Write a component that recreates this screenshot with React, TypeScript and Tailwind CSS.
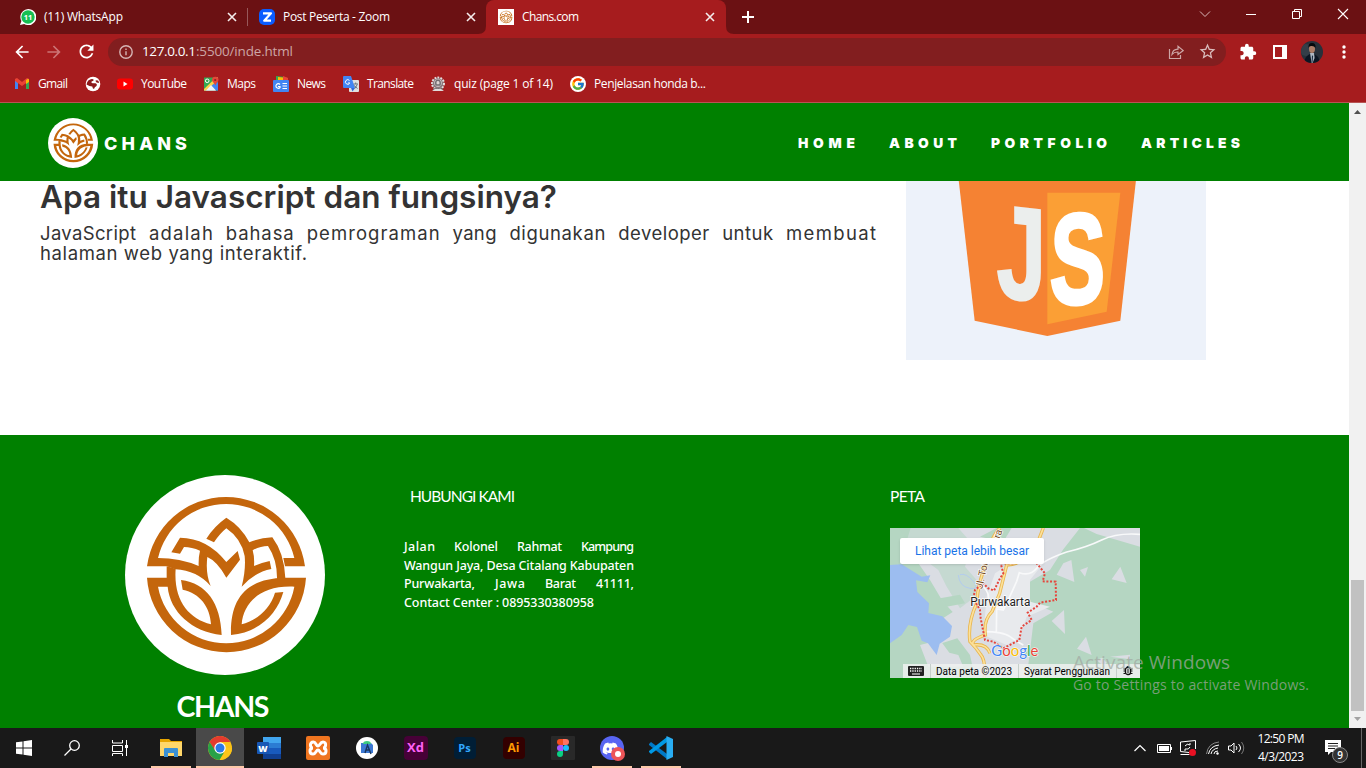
import { useLayoutEffect, useRef, useState } from "react";
import type { ReactNode } from "react";
import { FcGoogle } from "react-icons/fc";
import { FaDiscord } from "react-icons/fa";
import { MdExtension, MdStarOutline, MdRefresh, MdArrowBack, MdArrowForward } from "react-icons/md";

/* Text tracked so that it spans exactly `w` pixels. */
function Fit({ w, className = "", children }: { w: number; className?: string; children: string }) {
  const ref = useRef<HTMLSpanElement>(null);
  const [ls, setLs] = useState(0);
  useLayoutEffect(() => {
    const el = ref.current;
    if (!el) return;
    el.style.letterSpacing = "0px";
    const natural = el.getBoundingClientRect().width;
    const next = (w - natural) / Math.max(1, children.length - 1);
    el.style.letterSpacing = `${next}px`;
    setLs(next);
  }, [w, children]);
  return (
    <span className={`block shrink-0 whitespace-nowrap ${className}`} style={{ width: w }}>
      <span ref={ref} style={{ letterSpacing: ls }}>{children}</span>
    </span>
  );
}

function Emblem({ className }: { className: string }) {
  return (
    <svg viewBox="75 45 600 600" className={className}>
      <circle cx="375" cy="345" r="300" fill="#fff" />
      <g fill="#c4660c">
        <path d="M141 319A239 239 0 0 1 615 319H555L550 294H583A210 210 0 0 0 174 294Q240 294 296 318Q295 292 300 272Q275 261 252 261L240 281L214 277L240 233Q322 234 379 306L413 273L420 299L379 353Q352 304 322 291Q316 340 332 378Q292 332 226 328L200 319Z" />
        <path d="M379 173Q424 200 448 247Q480 233 517 232Q553 280 556 354L531 357Q532 300 504 258Q480 258 458 271Q464 292 462 318Q486 307 509 303L514 327Q466 336 425 380Q438 330 434 288Q424 236 379 205Q360 220 342 247L319 236Q342 199 379 173Z" />
        <path d="M200 319L227 326C220 420 265 475 333 493C330 440 300 400 248 389L243 360C320 370 362 430 365 525C275 515 210 455 203 380H174A208 208 0 0 0 583 380C480 375 430 430 425 493C470 482 512 445 525 398L550 396C532 460 480 517 393 525C390 420 435 355 555 353H618A239 239 0 0 1 141 353H200Z" />
      </g>
    </svg>
  );
}

const Close = () => (
  <svg viewBox="0 0 10 10" className="size-[10px] shrink-0"><path d="M1 1l8 8M9 1l-8 8" stroke="#f5eded" strokeWidth="1.6" /></svg>
);

function TabStrip() {
  return (
    <div className="flex h-[34px] bg-[#6b1113] text-xs text-white">
      <div className="flex w-[247px] items-center pl-5">
        <svg viewBox="0 0 16 16" className="size-4"><path d="M0 16L1.4 12A8 8 0 1 1 4.2 14.9Z" fill="#fff" /><circle cx="8" cy="8" r="6.7" fill="#16bf52" /><text x="8" y="10.8" textAnchor="middle" fontFamily="Open Sans" fontWeight="700" fontSize="7.5" fill="#fff">11</text></svg>
        <Fit w={79} className="ml-2">(11) WhatsApp</Fit>
        <span className="ml-[104px]"><Close /></span>
      </div>
      <div className="mt-2 h-[18px] w-px bg-[#97585a]" />
      <div className="flex w-[238px] items-center pl-[11px]">
        <svg viewBox="0 0 16 16" className="size-4"><rect width="16" height="16" rx="5" fill="#0b5cff" /><path d="M4 4.3h8L5.2 11.7H12" fill="none" stroke="#fff" strokeWidth="2.2" strokeLinejoin="round" /></svg>
        <Fit w={107} className="ml-2">Post Peserta - Zoom</Fit>
        <span className="ml-[76px]"><Close /></span>
      </div>
      <div className="relative flex w-[240px] items-center rounded-t-lg bg-[#a61c1e] pl-3">
        <svg viewBox="0 0 8 8" className="absolute bottom-0 -left-2 size-2"><path d="M8 0V8H0Q8 8 8 0" fill="#a61c1e" /></svg>
        <svg viewBox="0 0 8 8" className="absolute -right-2 bottom-0 size-2"><path d="M0 0V8H8Q0 8 0 0" fill="#a61c1e" /></svg>
        <span className="bg-white"><Emblem className="block size-4" /></span>
        <Fit w={57} className="ml-2">Chans.com</Fit>
        <span className="ml-[126px]"><Close /></span>
      </div>
      <div className="flex flex-1 items-center pl-4">
        <svg viewBox="0 0 12 12" className="size-3"><path d="M6 0v12M0 6h12" stroke="#fff" strokeWidth="2" /></svg>
      </div>
      <div className="flex items-start gap-[34px] pt-[8px] pr-[17px]">
        <svg viewBox="0 0 12 12" className="size-3"><path d="M1 3.5l5 5 5-5" fill="none" stroke="#d9b8b8" /></svg>
        <svg viewBox="0 0 12 12" className="size-3"><path d="M1 6.5h10" stroke="#fff" /></svg>
        <svg viewBox="0 0 12 12" className="size-3"><path d="M1.5 3.5h7v7h-7zM3.5 3.5v-2h7v7h-2" fill="none" stroke="#fff" /></svg>
        <svg viewBox="0 0 12 12" className="size-3"><path d="M1 1l10 10M11 1l-10 10" stroke="#fff" strokeWidth="1.1" /></svg>
      </div>
    </div>
  );
}

function Toolbar() {
  return (
    <div className="flex h-[35px] items-center pl-[13px] text-white">
      <MdArrowBack className="size-[18px] scale-110" />
      <MdArrowForward className="ml-[14px] size-[18px] scale-110 text-[#cc7475]" />
      <MdRefresh className="ml-[14px] size-[19px] scale-110" />
      <div className="ml-[12px] flex h-7 w-[1118px] items-center rounded-full bg-[#821e1f] pl-[11px] text-[13.5px]">
        <svg viewBox="0 0 14 14" className="size-[14px]"><circle cx="7" cy="7" r="6.2" fill="none" stroke="#d6b5b5" strokeWidth="1.4" /><path d="M7 6.2v4M7 3.5v1.5" stroke="#d6b5b5" strokeWidth="1.4" /></svg>
        <Fit w={54} className="ml-[9px]">127.0.0.1</Fit>
        <Fit w={97} className="text-[#cda5a5]">:5500/inde.html</Fit>
        <svg viewBox="0 0 16 16" className="ml-auto size-4" fill="none" stroke="#cda5a5" strokeWidth="1.2"><path d="M1.5 5v9.5h11V11M4 10.5Q4.500 5.500 10 5.200V2.200L15.200 6.500 10 10.500V8Q6 7.800 4 10.500Z" /></svg>
        <MdStarOutline className="mr-[9px] ml-[14px] size-[19px] text-[#d9bcbc]" />
      </div>
      <MdExtension className="ml-[13px] size-[18px]" />
      <svg viewBox="0 0 14 14" className="ml-[16px] size-[14px]"><path d="M1 1h12v12H1z" fill="none" stroke="#fff" strokeWidth="2" /><path d="M9 1h4v12H9z" fill="#fff" /></svg>
      <svg viewBox="0 0 22 22" className="ml-[14px] size-[22px] rounded-full">
        <rect width="22" height="22" fill="#27303a" /><circle cx="5" cy="9" r="6" fill="#343e48" />
        <path d="M3 22Q4 14 11 12Q18 14 19 22Z" fill="#0b1522" /><path d="M9 12h4l.6 5-2 5h-1z" fill="#aeb8c3" /><path d="M11 14l1 1.500-.6 6h-.8z" fill="#10243a" />
        <ellipse cx="11" cy="7.800" rx="3" ry="4.300" fill="#ad7d67" /><path d="M7.500 7Q7 2 11 2T14.500 7Q13 4.500 10 5Q8 5 7.500 7Z" fill="#05080c" />
      </svg>
      <svg viewBox="0 0 4 14" className="ml-[19px] h-[14px] w-1" fill="#fff"><circle cx="2" cy="2" r="1.700" /><circle cx="2" cy="7" r="1.700" /><circle cx="2" cy="12" r="1.700" /></svg>
    </div>
  );
}

function Mark({ gap, w, label, children }: { gap: number; w?: number; label?: string; children: ReactNode }) {
  return (
    <div className="flex items-center" style={{ marginLeft: gap }}>
      {children}
      {label && w ? <Fit w={w} className="ml-2">{label}</Fit> : null}
    </div>
  );
}

function Bookmarks() {
  return (
    <div className="flex h-[33px] items-center pb-[3px] pl-[14px] text-xs text-white">
      <Mark gap={0} w={30} label="Gmail">
        <svg viewBox="0 0 16 16" className="size-4"><path d="M1 3v10h3V6z" fill="#4285f4" /><path d="M12 6v7h3V3z" fill="#34a853" /><path d="M1 5V3l2-1 5 4 5-4 2 1v2l-7 5z" fill="#ea4335" /><path d="M12 4.300l2-1.500 1 .7V6l-3 2z" fill="#fbbc04" /></svg>
      </Mark>
      <Mark gap={17}>
        <svg viewBox="0 0 16 16" className="size-4"><circle cx="8" cy="8" r="7.300" fill="#fff" /><path d="M3.300 4.500Q6 2.300 8.300 3.300Q9.300 4.800 7 5.200Q5.500 6.500 7.500 7.200H10.500Q12.500 7.800 11.500 10Q9.500 10.800 9 13Q7.500 12.500 7.300 10.500Q4.500 10.500 1.500 8.500Q2 6 3.300 4.500ZM10.300 4.800Q12 3.800 13.500 5L14 7Q11 7 10.300 4.800Z" fill="#8d191b" /></svg>
      </Mark>
      <Mark gap={16} w={46} label="YouTube">
        <svg viewBox="0 0 16 16" className="size-4"><rect y="2.500" width="16" height="11" rx="3" fill="#f00" /><path d="M6.500 5.500v5l4-2.500z" fill="#fff" /></svg>
      </Mark>
      <Mark gap={16} w={29} label="Maps">
        <svg viewBox="0 0 16 16" className="size-4"><path d="M1 1.500h14v13H1z" fill="#34a853" /><path d="M1 14.500l6-6 6 6z" fill="#dce6f2" /><path d="M15 6v8.500h-2L7.500 9z" fill="#4285f4" /><path d="M1 13L13 1.500h2V4L3 14.500H1z" fill="#fbd24c" /><path d="M3 14.500L8 9l5 5.500z" fill="#eef2f7" /><circle cx="4.200" cy="4.800" r="1.800" fill="none" stroke="#fff" /><path d="M9 4a3.200 3.200 0 1 1 6.500 0c0 2-2.300 3-3.200 5.500C11.500 7 9 6 9 4z" fill="#e5473a" /><circle cx="12.200" cy="4" r="1.100" fill="#8d2520" /></svg>
      </Mark>
      <Mark gap={17} w={29} label="News">
        <svg viewBox="0 0 16 16" className="size-4"><path d="M3 0l9 1v5H3z" fill="#34a853" /><path d="M5 1l10 1v5H5z" fill="#fbbc04" /><path d="M10 0l5 2v4h-5z" fill="#ea4335" /><rect y="4" width="16" height="12" rx="1" fill="#4285f4" /><path d="M7 8.500a2.300 2.300 0 1 0 0 3V10.500H5M9.500 7.500h4.500M9.500 10h4.500M9.500 12.500h4.500" fill="none" stroke="#fff" strokeWidth="1.200" /></svg>
      </Mark>
      <Mark gap={17} w={47} label="Translate">
        <svg viewBox="0 0 16 16" className="size-4"><rect x="6" y="4" width="10" height="12" rx="1" fill="#e0e0e0" /><path d="M0 1q0-1 1-1h7l4 12H1q-1 0-1-1z" fill="#4285f4" /><path d="M6.500 4.500a2.300 2.300 0 1 0 .3 2.500H5" fill="none" stroke="#fff" /><path d="M8 12h4l-2.500 3.500z" fill="#3367d6" /><path d="M10.500 8H15M12.700 6.500V8M11 9.500l3.500 3M14.300 8.500l-2.500 4" stroke="#657581" fill="none" /></svg>
      </Mark>
      <Mark gap={16} w={99} label="quiz (page 1 of 14)">
        <svg viewBox="0 0 16 16" className="size-4"><circle cx="8" cy="7.500" r="6" fill="#8a777c" stroke="#e4dddd" strokeWidth="2" strokeDasharray="1.800 1.200" /><circle cx="8" cy="7" r="3.700" fill="#ded6d6" /><path d="M6 9Q5 4 8 4.200T10 9zM3 13h10" fill="none" stroke="#716c70" strokeWidth="1.500" /><path d="M2 15l3-2h6l3 2z" fill="#e0dbdb" /></svg>
      </Mark>
      <Mark gap={17} w={112} label="Penjelasan honda b...">
        <span className="flex size-4 items-center justify-center rounded-full bg-white"><FcGoogle className="size-[14px]" /></span>
      </Mark>
    </div>
  );
}

function SiteHeader() {
  return (
    <header className="flex h-[78px] items-center bg-[#008000] pt-[2px] pl-12 font-['Inter'] text-white">
      <Emblem className="size-[50px]" />
      <Fit w={83} className="ml-[6px] text-[18px] font-extrabold">CHANS</Fit>
      <nav className="ml-[611px] flex text-[13.8px] font-black">
        <Fit w={57}>HOME</Fit>
        <Fit w={68} className="ml-[34px]">ABOUT</Fit>
        <Fit w={116} className="ml-[34px]">PORTFOLIO</Fit>
        <Fit w={99} className="ml-[34px]">ARTICLES</Fit>
      </nav>
    </header>
  );
}

function JsShield() {
  return (
    <svg viewBox="18 3 900 537" className="h-[179px] w-[300px] shrink-0 bg-[#edf2fa]">
      <path d="M176 0H708L661 422L442 468L224 422Z" fill="#f58233" />
      <path d="M442 38H661L620 395L442 433Z" fill="#fb9f35" />
      <g fontFamily="Liberation Sans" fontWeight="700" fontSize="100" strokeLinejoin="miter">
        <text transform="matrix(2.660 .3 0 3.950 290 349)" fill="#ebeeed" stroke="#ebeeed" strokeWidth="2">J</text>
        <text transform="matrix(2.480 -.08 -.08 3.850 448 373)" fill="#fff" stroke="#fff" strokeWidth="3">S</text>
      </g>
    </svg>
  );
}

const words: [string, number][] = [["JavaScript", 96], ["adalah", 64], ["bahasa", 68], ["pemrograman", 133], ["yang", 44], ["digunakan", 96], ["developer", 91], ["untuk", 51], ["membuat", 90]];

function Article() {
  return (
    <main className="flex h-[254px] bg-white pl-10 font-['Inter'] text-[#333]">
      <div className="w-[866px]">
        <h1 className="text-[31.500px] leading-[32px] font-semibold"><Fit w={517}>Apa itu Javascript dan fungsinya?</Fit></h1>
        <div className="mt-[10px] w-[836px] text-[18.500px] leading-5">
          <div className="flex justify-between">
            {words.map(([t, w]) => <Fit key={t} w={w}>{t}</Fit>)}
          </div>
          <Fit w={267}>halaman web yang interaktif.</Fit>
        </div>
      </div>
      <JsShield />
    </main>
  );
}

function MapView() {
  return (
    <div className="relative h-[150px] w-[250px]">
      <svg viewBox="30 24 750 450" className="block h-[150px] w-[250px]">
        <rect x="30" y="24" width="750" height="450" fill="#b5d6c2" />
        <g fill="#dadde3">
          <path d="M92 24H600L550 88L510 150L450 185L450 245L520 275L460 310L440 474H285L270 405L232 355L185 370L168 308L218 276L187 242L150 180L115 130L70 95Z" />
          <path d="M612 24L650 42L780 80V24Z" /><path d="M550 130L574 120L583 186L530 164ZM600 150L624 141L615 170ZM721 140L740 189L695 178ZM515 303L552 270L555 342ZM618 350L635 405L591 386ZM210 150L237 180L215 181ZM650 420L666 413L680 428L670 438ZM690 410L750 404V418ZM120 375L180 360L208 398L235 405L250 440H145Z" />
        </g>
        <path d="M235 24L275 70L255 140L290 180L285 230L240 265L200 200L175 150L115 105L55 24ZM70 24H170L135 60Z" fill="#b5d6c2" opacity=".55" />
        <path d="M345 160L400 125L490 130L450 180L450 245L510 260L440 290L420 350L380 375L310 345L320 230Z" fill="#e8eaed" />
        <path d="M180 235L240 224L255 250L200 260ZM300 50L350 24H395L370 65ZM435 400L470 365L475 430Z" fill="#b5d6c2" />
        <path d="M30 135L65 133L125 170L151 166L142 187L108 181L112 216L147 250L145 279L187 289L216 318L210 350L179 371L170 405L144 370L125 362L111 321L85 315L65 345L30 370ZM30 310L43 335L30 345Z" fill="#9cbdf0" />
        <path d="M235 165Q238 200 270 205T280 184T240 164" fill="none" stroke="#b3ccee" strokeWidth="3" />
        <path d="M780 43Q710 38 665 60T560 96Q490 120 470 145T418 158L410 184Q385 240 370 270L350 267L349 337M310 335Q370 335 390 350T430 375M300 190Q330 215 325 240L345 260L375 265" fill="none" stroke="#f8f9fa" strokeWidth="5" />
        <path d="M490 24L470 75Q445 130 380 135L359 220L336 275Q310 300 316 345Q270 360 280 375Q320 370 330 400M360 24Q325 60 318 135Q294 185 290 250Q262 310 270 365Q290 385 303 405Q317 420 313 474" fill="none" stroke="#e8b54d" strokeWidth="10" />
        <path d="M490 24L470 75Q445 130 380 135L359 220L336 275Q310 300 316 345Q270 360 280 375Q320 370 330 400M360 24Q325 60 318 135Q294 185 290 250Q262 310 270 365Q290 385 303 405Q317 420 313 474" fill="none" stroke="#fce19a" strokeWidth="5" />
        <path d="M400 130H362L370 160L360 175L342 212L325 205L310 190L285 210L280 235L300 270L302 295L310 335L315 360L340 365L370 385L418 360L425 320L455 300L443 278L470 260L480 248L528 240L527 185L488 184L495 160L470 130" fill="none" stroke="#e5453c" strokeWidth="6" strokeDasharray="6 5" />
        <g fontFamily="Roboto" fill="#734718" stroke="#fff" strokeWidth="4" paintOrder="stroke" fontSize="30">
          <text transform="translate(307 208) rotate(-78)">Jl. Tol</text><text transform="translate(359 57) rotate(-72)">ra</text>
        </g>
        <text x="271" y="258" textLength="180" lengthAdjust="spacingAndGlyphs" fontFamily="Roboto" fontSize="36" fill="#222" stroke="#fff" strokeWidth="4" paintOrder="stroke">Purwakarta</text>
        <text x="334" y="409" textLength="141" lengthAdjust="spacingAndGlyphs" fontFamily="Lato" fontWeight="400" fontSize="46" stroke="#fff" strokeWidth="3" paintOrder="stroke"><tspan fill="#4285f4">G</tspan><tspan fill="#ea4335">o</tspan><tspan fill="#fbbc04">o</tspan><tspan fill="#4285f4">g</tspan><tspan fill="#34a853">l</tspan><tspan fill="#ea4335">e</tspan></text>
      </svg>
      <div className="absolute top-[10px] left-[10px] flex h-[26px] w-[144px] items-center rounded-xs bg-white pl-[15px] font-['Roboto'] text-xs text-[#1a73e8] shadow-sm"><Fit w={114}>Lihat peta lebih besar</Fit></div>
      <div className="absolute right-0 bottom-0 flex h-[14px] w-[237px] items-center bg-[#eef1f0]/85 font-['Roboto'] text-[10px] text-black">
        <svg viewBox="0 0 16 10" className="ml-[5px] h-[10px] w-4"><rect width="16" height="10" rx="1" fill="#222" /><path d="M2 2.500h12M2 5h12" stroke="#fff" strokeWidth="1.300" strokeDasharray="1.300 1" /><path d="M4 8h8" stroke="#fff" /></svg>
        <span className="ml-[6px] h-full w-px bg-[#c5cfca]" />
        <Fit w={76} className="ml-[5px]">Data peta ©2023</Fit>
        <span className="ml-[6px] h-full w-px bg-[#c5cfca]" />
        <Fit w={86} className="ml-[5px]">Syarat Penggunaan</Fit>
        <span className="ml-[6px] h-full w-px bg-[#c5cfca]" />
        <svg viewBox="0 0 10 10" className="ml-[6px] size-[10px]" fill="none" stroke="#111"><rect x="2.500" y="1.500" width="5" height="7" rx="2" strokeWidth="1.300" /><path d="M0.500 3h2M.5 5h2M.5 7.500h2M7.500 3h2M7.500 5h2M7.500 7.500h2M4 0l1 1.500L6 0M4 4h2M4 6h2" /></svg>
      </div>
    </div>
  );
}

function Spread({ items }: { items: [string, number][] }) {
  return <div className="flex justify-between">{items.map(([t, w]) => <Fit key={t} w={w}>{t}</Fit>)}</div>;
}

function Footer() {
  return (
    <footer className="flex h-[293px] bg-[#008000] pl-[125px] font-['Noto_Sans'] text-white">
      <div className="flex w-[200px] flex-col items-center pt-10">
        <Emblem className="size-[200px] shrink-0" />
        <Fit w={93} className="mt-[12px] mr-1 font-['Lato'] text-[28.500px] leading-[38px] font-bold">CHANS</Fit>
      </div>
      <div className="ml-[79px] w-[230px] pt-[50px]">
        <Fit w={105} className="ml-[6px] font-['Lato'] text-[15.500px] leading-[22px]">HUBUNGI KAMI</Fit>
        <div className="mt-[31px] text-[12.500px] leading-[18.700px] font-medium">
          <Spread items={[["Jalan", 31], ["Kolonel", 44], ["Rahmat", 45], ["Kampung", 53]]} />
          <Fit w={230}>Wangun Jaya, Desa Citalang Kabupaten</Fit>
          <Spread items={[["Purwakarta,", 71], ["Jawa", 30], ["Barat", 31], ["41111,", 38]]} />
          <Fit w={190}>Contact Center : 0895330380958</Fit>
        </div>
      </div>
      <div className="ml-[256px] pt-[50px]">
        <Fit w={35} className="mb-[21px] font-['Lato'] text-[15.500px] leading-[22px]">PETA</Fit>
        <MapView />
      </div>
    </footer>
  );
}

function AdobeTile({ label, className }: { label: string; className: string }) {
  return <span className={`flex items-center justify-center rounded font-['Open_Sans'] font-bold ${className}`}>{label}</span>;
}

function Task({ open, active, wide, children }: { open?: boolean; active?: boolean; wide?: boolean; children: ReactNode }) {
  return (
    <div className={`flex h-10 shrink-0 flex-col items-center ${wide ? "w-[48px]" : "w-[49px]"}`}>
      <div className={`flex h-[38px] w-12 items-center justify-center pt-[2px] ${active ? "bg-[#494949]" : ""}`}>{children}</div>
      <div className={`h-[2px] ${active ? "w-12" : "w-10"} ${open || active ? "bg-[#fdc9a9]" : ""}`} />
    </div>
  );
}

function Taskbar() {
  return (
    <div className="flex h-10 bg-[#191919] font-['Open_Sans'] text-white">
      <Task wide><svg viewBox="0 0 16 16" className="size-4" fill="#fff"><path d="M0 2.300L6.500 1.400V7.500H0zM7.500 1.200L16 0V7.500H7.500zM0 8.500H6.500V14.600L0 13.700zM7.500 8.500H16V16L7.500 14.800z" /></svg></Task>
      <Task wide><svg viewBox="0 0 16 16" className="size-4" fill="none" stroke="#fff" strokeWidth="1.300"><circle cx="10.500" cy="5.500" r="4.800" /><path d="M7 9L.5 15.500" /></svg></Task>
      <Task wide><svg viewBox="0 0 16 16" className="size-4" fill="none" stroke="#fff"><path d="M.5 0v3h10V0M.5 5.500h10v6H.5zM.5 16v-2.500h10V16M14.500 0v16" /><path d="M13 5h3v3h-3z" fill="#fff" stroke="none" /></svg></Task>
      <div className="w-[2px]" />
      <Task open><svg viewBox="0 0 22 20" className="h-5 w-[22px]"><path d="M0 1h9l2 2h11v15H0z" fill="#e7a500" /><path d="M0 4h22v14H0z" fill="#ffd76a" /><path d="M4 11q0-1 1-1h12q1 0 1 1v8h-4v-4H8v4H4z" fill="#3c91d3" /></svg></Task>
      <Task active><svg viewBox="0 0 24 24" className="size-6"><circle cx="12" cy="12" r="12" fill="#fbc116" /><path d="M12 12H24A12 12 0 0 1 11 24L16.500 15Z" fill="#fcc519" /><path d="M1.600 6A12 12 0 0 1 22.400 6H12L7 15Z" fill="#e33b2e" /><path d="M1.600 6L7.500 15 16 16.500 11.500 24A12 12 0 0 1 1.600 6Z" fill="#28a148" /><circle cx="12" cy="12" r="5.700" fill="#fff" /><circle cx="12" cy="12" r="4.500" fill="#2d79e8" /></svg></Task>
      <Task><svg viewBox="0 0 24 22" className="h-[22px] w-6"><path d="M6 0h18v6H6z" fill="#41a5ee" /><path d="M6 6h18v5H6z" fill="#2b7cd3" /><path d="M6 11h18v6H6z" fill="#185abd" /><path d="M6 17h18v5H6z" fill="#103f91" /><rect y="5" width="12" height="12" rx="1" fill="#1857b5" /><text x="6" y="14.500" textAnchor="middle" fontFamily="Open Sans" fontWeight="800" fontSize="9" fill="#fff">W</text></svg></Task>
      <Task><svg viewBox="0 0 24 24" className="size-6"><rect width="24" height="24" rx="2" fill="#ef751f" /><path d="M7.500 6C3 6 4 12 7 12c-4 0-4 6 0 6 3 0 3-4 5-4s2 4 5 4c4 0 4-6 0-6 3 0 4-6 0-6-3 0-3 4-5 4S10 6 7.500 6Z" fill="none" stroke="#fff" strokeWidth="3" /></svg></Task>
      <Task><svg viewBox="0 0 22 22" className="size-[22px]"><circle cx="11" cy="11" r="11" fill="#fff" /><path d="M5 6h10l2 2v8H5z" fill="#3c78d3" /><path d="M7 7a4 3 0 0 1 8 0z" fill="#3dcb82" /><path d="M9 16l2.500-8L15 17M10 13h4" fill="none" stroke="#18365f" strokeWidth="1.400" /></svg></Task>
      <Task><AdobeTile label="Xd" className="size-6 bg-[#470137] text-[13px] text-[#ff61f6]" /></Task>
      <Task><AdobeTile label="Ps" className="size-[22px] bg-[#001e36] text-[11px] text-[#31a8ff]" /></Task>
      <Task><AdobeTile label="Ai" className="size-[22px] bg-[#330000] text-[12px] text-[#ff9a00]" /></Task>
      <Task><svg viewBox="0 0 24 24" className="size-6"><rect width="24" height="24" rx="1" fill="#292929" /><path d="M12 3H9a3 3 0 0 0 0 6h3z" fill="#f24e1e" /><path d="M12 3h3a3 3 0 0 1 0 6h-3z" fill="#ff7262" /><path d="M12 9H9a3 3 0 0 0 0 6h3z" fill="#a259ff" /><circle cx="15" cy="12" r="3" fill="#1abcfe" /><path d="M12 15H9a3 3 0 1 0 3 3z" fill="#0acf83" /></svg></Task>
      <Task open><span className="relative flex size-6 items-center justify-center rounded-full bg-[#5865f2]"><FaDiscord className="mr-[3px] size-[17px]" /><span className="absolute -right-[1px] -bottom-[1px] flex size-[14px] items-center justify-center rounded-full bg-[#ed5558]"><span className="size-[6px] rounded-full bg-white" /></span></span></Task>
      <Task open><svg viewBox="0 0 24 24" className="size-6"><path d="M0 8l2-2 16 12v5L0 9z" fill="#0079c7" /><path d="M0 16l2 2L18 6V1L0 15z" fill="#0099e5" /><path d="M17.500 0L24 3v18l-6.500 3z" fill="#29adf2" /></svg></Task>
      <div className="ml-auto flex items-center pr-[4px]">
        <svg viewBox="0 0 12 8" className="h-2 w-3"><path d="M.5 7L6 1.500 11.500 7" fill="none" stroke="#fff" strokeWidth="1.200" /></svg>
        <svg viewBox="0 0 15 9" className="ml-[11px] h-[9px] w-[15px]"><path d="M.5.5h13v8H.5z" fill="none" stroke="#fff" /><path d="M2 2h10v5H2zM14 3h1v3h-1z" fill="#fff" /></svg>
        <svg viewBox="0 0 17 16" className="ml-[8px] h-4 w-[17px]" fill="none" stroke="#fff"><path d="M9 12.500L.5 11.500V2L15.500 .5V9M.5 14.500h9" /><path d="M5 6Q7 3 10 5V3M10 7Q9 10 5 9v2" /><circle cx="12.500" cy="12.500" r="3.500" fill="#e81123" stroke="none" /></svg>
        <svg viewBox="0 0 14 14" className="ml-[9px] size-[14px]" fill="none" stroke="#fff"><path d="M5 13Q6 8 12 7M2.500 13Q4 5 13 4M8 13Q8 10 12 10" /><path d="M.5 13Q2 2 13 1" stroke="#888" /><circle cx="11.500" cy="12.500" r="1.200" fill="#fff" stroke="none" /></svg>
        <svg viewBox="0 0 17 14" className="ml-[8px] h-[14px] w-[17px]" fill="none" stroke="#fff"><path d="M.5 5h2.500l3-3v10l-3-3H.5zM8 5q2 2 0 4M10.500 3q4 4 0 8" /><path d="M13.500 1q4.500 6 0 12" stroke="#777" /></svg>
        <div className="ml-[12px] flex w-12 flex-col items-center text-xs leading-[18px]"><Fit w={47}>12:50 PM</Fit><Fit w={46}>4/3/2023</Fit></div>
        <div className="relative ml-[20px] size-6">
          <svg viewBox="0 0 16 15" className="mt-[4px] h-[15px] w-4"><path d="M0 0h16v12H6l-3 3v-3H0z" fill="#fff" /><path d="M3 3.500h10M3 6h10M3 8.500h7" stroke="#222" /></svg>
          <span className="absolute top-[11px] left-[7px] flex size-4 items-center justify-center rounded-full border border-[#888] bg-[#333] text-[10px] font-semibold">9</span>
        </div>
        <span className="ml-[12px] h-10 w-px bg-[#666]" />
      </div>
    </div>
  );
}

export default function App() {
  return (
    <div className="relative flex h-[768px] w-[1366px] flex-col overflow-hidden bg-[#a61c1e] font-['Open_Sans',sans-serif]">
      <TabStrip />
      <Toolbar />
      <Bookmarks />
      <div className="h-px bg-[#b75454]" />
      <div className="flex h-[625px]">
        <div className="w-[1349px]">
          <SiteHeader />
          <Article />
          <Footer />
        </div>
        <div className="flex w-[17px] flex-col items-center bg-[#f1f1f1]">
          <svg viewBox="0 0 17 17" className="size-[17px]"><path d="M5 11l3.500-4L12 11z" fill="#505050" /></svg>
          <div className="mt-[460px] h-[131px] w-[13px] bg-[#c1c1c1]" />
          <svg viewBox="0 0 17 17" className="size-[17px]"><path d="M5 6l3.500 4L12 6z" fill="#a3a3a3" /></svg>
        </div>
      </div>
      <Taskbar />
      <div className="absolute top-[648px] left-[1073px] text-[#a2aaa2]/75">
        <Fit w={157} className="text-[19px] leading-7">Activate Windows</Fit>
        <Fit w={236} className="text-[14px] leading-[18px]">Go to Settings to activate Windows.</Fit>
      </div>
    </div>
  );
}
